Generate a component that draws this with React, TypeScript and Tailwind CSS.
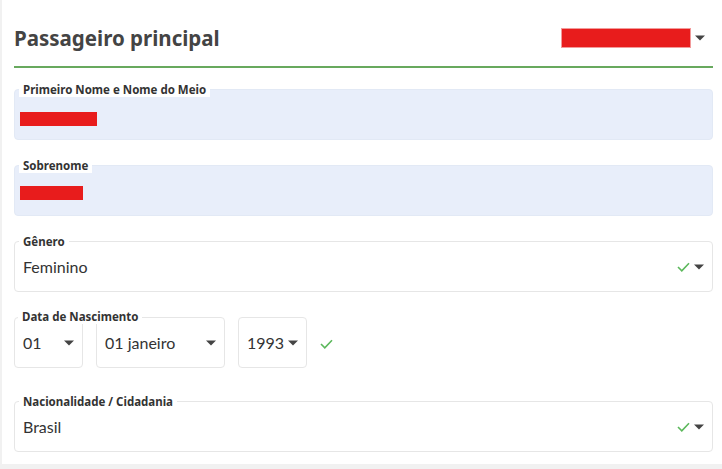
import React from 'react'

const Caret = () => (
  <svg width="10" height="6" viewBox="0 0 10 6" className="shrink-0">
    <path d="M0 0.5h10L5 5.5z" fill="#444" />
  </svg>
)

const Check = () => (
  <svg width="13" height="10" viewBox="0 0 13 10" className="shrink-0">
    <path d="M1 5l3.8 3.8L12 1.2" fill="none" stroke="#5cb85c" strokeWidth="1.6" />
  </svg>
)

type FieldProps = {
  label: string
  filled?: boolean
  className?: string
  children: React.ReactNode
}

const labelCls =
  "absolute left-[4px] top-[-7px] z-10 bg-white px-[4px] font-['Noto_Sans',sans-serif] text-[11.5px] font-bold leading-[14px] text-[#333]"

function Field({ label, filled, className = '', children }: FieldProps) {
  return (
    <div
      className={`relative h-[51px] rounded-[4px] border ${
        filled ? 'border-[#e2e9f5] bg-[#e8eefa]' : 'border-[#e6e6e6] bg-white'
      } ${className}`}
    >
      <span className={labelCls}>{label}</span>
      {children}
    </div>
  )
}

function Redacted({ width }: { width: number }) {
  return <div className="h-[14px] bg-[#e81c1c]" style={{ width }} />
}

const App: React.FC = () => {
  return (
    <div className="min-h-[469px] bg-[#f1f1f1] pl-[2px] font-['Lato','Liberation_Sans',sans-serif]">
      <div className="h-[464px] bg-white pl-3 pr-[9px]">
        <div className="flex h-[68px] items-center justify-between border-b-2 border-[#68a95e] pt-[11px]">
          <h1 className="font-['Noto_Sans',sans-serif] text-[20.5px] font-bold text-[#444]">
            Passageiro principal
          </h1>
          <div className="mb-[2px] flex items-center gap-[4px] pr-[8px]">
            <div className="h-[20px] w-[130px] border border-[#f29a9a] bg-[#e81c1c]" />
            <Caret />
          </div>
        </div>

        <div className="mt-[21px] flex flex-col">
          <Field label="Primeiro Nome e Nome do Meio" filled>
            <div className="pl-[5px] pt-[22px]">
              <Redacted width={77} />
            </div>
          </Field>

          <Field label="Sobrenome" filled className="mt-[25px]">
            <div className="pl-[5px] pt-[20px]">
              <Redacted width={63} />
            </div>
          </Field>

          <Field label="Gênero" className="mt-[25px]">
            <div className="flex h-full items-center justify-between pl-[8px] pr-[8px] pt-[1px] text-[16px] text-[#333]">
              <span>Feminino</span>
              <div className="flex items-center gap-[4px]">
                <Check />
                <Caret />
              </div>
            </div>
          </Field>

          <div className="relative mt-[25px] flex items-center gap-[13px]">
            <span className={labelCls}>Data de Nascimento</span>
            {[
              { value: '01', w: 'w-[69px]' },
              { value: '01 janeiro', w: 'w-[129px]' },
              { value: '1993', w: 'w-[69px]' },
            ].map((s, i) => (
              <div
                key={i}
                className={`flex h-[51px] ${s.w} items-center justify-between rounded-[4px] border border-[#e6e6e6] pl-[8px] pr-[8px] pt-[1px] text-[16px] text-[#333]`}
              >
                <span>{s.value}</span>
                <Caret />
              </div>
            ))}
            <div className="pt-[2px]">
              <Check />
            </div>
          </div>

          <Field label="Nacionalidade / Cidadania" className="mt-[33px]">
            <div className="flex h-full items-center justify-between pl-[8px] pr-[8px] pt-[1px] text-[16px] text-[#333]">
              <span>Brasil</span>
              <div className="flex items-center gap-[4px]">
                <Check />
                <Caret />
              </div>
            </div>
          </Field>
        </div>
      </div>
    </div>
  )
}

export default App
